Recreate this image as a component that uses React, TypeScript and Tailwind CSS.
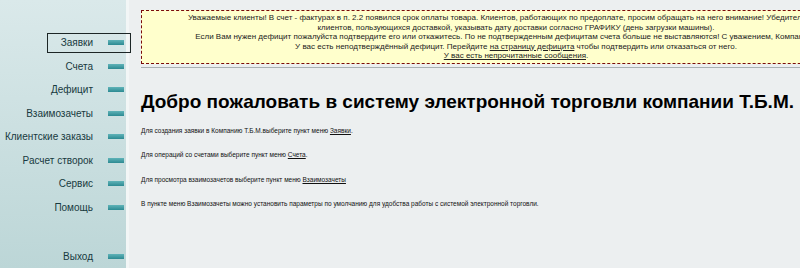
import React from 'react';

const menu = [
    'Заявки',
    'Счета',
    'Дефицит',
    'Взаимозачеты',
    'Клиентские заказы',
    'Расчет створок',
    'Сервис',
    'Помощь'
];

function MenuItem({ label, active }: { label: string; active?: boolean }) {
    return (
        <div className="h-[23.5px] flex items-center">
            <div
                className={
                    'flex items-center h-[20px] w-[84px] ml-[47px] pr-[6px] justify-end ' +
                    (active ? 'border border-[#1c2626]' : 'border border-transparent')
                }
            >
                <span className="text-[10px] text-[#173a40] whitespace-nowrap">{label}</span>
                <span className="ml-[15px] w-[16px] h-[5px] shrink-0 bg-[linear-gradient(to_bottom,#5fb3b8,#2c8a92)]" />
            </div>
        </div>
    );
}

export default function App() {
    return (
        <div className="w-[800px] h-[268px] overflow-hidden flex bg-[#eceff0] font-['Liberation_Sans',Arial,sans-serif]">
            {/* Меню */}
            <div className="w-[131px] shrink-0 pt-[31px] bg-[linear-gradient(to_right,transparent_126px,#f2f6f6_126px,#f2f6f6_129px,#eceff0_129px),linear-gradient(to_bottom,#dae9ea,#bcd6d7)]">
                {menu.map((m, i) => (
                    <MenuItem key={m} label={m} active={i === 0} />
                ))}
                <div className="h-[26px]" />
                <MenuItem label="Выход" />
            </div>

            {/* Основная часть */}
            <div className="flex-1 pl-[10px] pt-[10px] min-w-0">
                <div className="w-[750px] h-[54px] bg-[#ffffcc] border border-dashed border-[#7a0a0a] text-center text-[8px] leading-[9.6px] text-[#222] pt-[2px] whitespace-nowrap overflow-hidden">
                    <div>Уважаемые клиенты! В счет - фактурах в п. 2.2 появился срок оплаты товара. Клиентов, работающих по предоплате, просим обращать на него внимание! Убедительно просим</div>
                    <div>клиентов, пользующихся доставкой, указывать дату доставки согласно ГРАФИКУ (день загрузки машины).</div>
                    <div>Если Вам нужен дефицит пожалуйста подтвердите его или откажитесь. По не подтвержденным дефицитам счета больше не выставляются! С уважением, Компания Т.Б.М.</div>
                    <div>
                        У вас есть неподтверждённый дефицит. Перейдите <a className="underline">на страницу дефицита</a> чтобы подтвердить или отказаться от него.
                    </div>
                    <div>
                        <a className="underline">У вас есть непрочитанные сообщения</a>.
                    </div>
                </div>
                <div className="mt-[3px] h-[1px] bg-[#a9b0b1]" />

                <h1 className="mt-[22px] text-[19px] leading-[24px] font-bold text-black whitespace-nowrap">
                    Добро пожаловать в систему электронной торговли компании Т.Б.М.
                </h1>

                <div className="mt-[12px] text-[6.5px] leading-[9px] text-[#111] space-y-[15.3px]">
                    <p>Для создания заявки в Компанию Т.Б.М.выберите пункт меню <a className="underline">Заявки</a>.</p>
                    <p>Для операций со счетами выберите пункт меню <a className="underline">Счета</a>.</p>
                    <p>Для просмотра взаимозачетов выберите пункт меню <a className="underline">Взаимозачеты</a></p>
                    <p>В пункте меню Взаимозачеты можно установить параметры по умолчанию для удобства работы с системой электронной торговли.</p>
                </div>
            </div>
        </div>
    );
}
